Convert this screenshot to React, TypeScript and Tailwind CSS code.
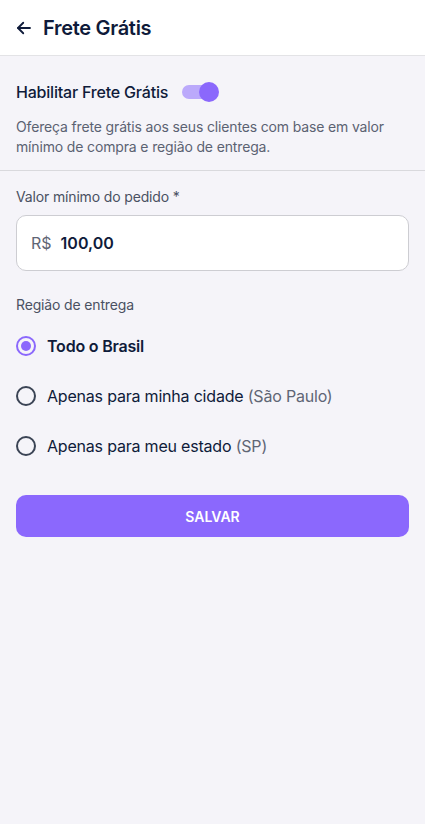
import { useState } from "react";

type Region = {
  id: string;
  label: string;
  extra?: string;
};

const REGIONS: Region[] = [
  { id: "brasil", label: "Todo o Brasil" },
  { id: "cidade", label: "Apenas para minha cidade", extra: "(São Paulo)" },
  { id: "estado", label: "Apenas para meu estado", extra: "(SP)" },
];

function BackArrow() {
  return (
    <svg width="18" height="18" viewBox="0 0 24 24" fill="none" stroke="#0f1b3a" strokeWidth="2.4" strokeLinecap="round" strokeLinejoin="round">
      <path d="M20 12H4" />
      <path d="M11 5l-7 7 7 7" />
    </svg>
  );
}

export default function App() {
  const [enabled, setEnabled] = useState(true);
  const [region, setRegion] = useState("brasil");

  return (
    <div className="min-h-[824px] w-full bg-[#f5f4f9] font-['Inter','Noto_Sans',sans-serif] text-[#0f1b3a]">
      <div className="flex h-[56px] items-center gap-[10px] border-b border-[#e3e3e6] bg-white px-[15px]">
        <BackArrow />
        <h1 className="text-[20px] font-semibold tracking-[-0.3px]">Frete Grátis</h1>
      </div>

      <div className="border-b border-[#d9d9dd] px-[16px] pb-[13px] pt-[24px]">
        <div className="flex items-center gap-[14px]">
          <span className="text-[16px] font-medium tracking-[-0.2px]">Habilitar Frete Grátis</span>
          <button
            onClick={() => setEnabled(!enabled)}
            className="relative h-[20px] w-[37px]"
          >
            <span className={`absolute left-0 top-[3px] h-[14px] w-[33px] rounded-full ${enabled ? "bg-[#bba9fb]" : "bg-[#d1d5db]"}`} />
            <span className={`absolute top-0 h-[20px] w-[20px] rounded-full ${enabled ? "right-0 bg-[#8b68fc]" : "left-0 bg-white"}`} />
          </button>
        </div>
        <p className="mt-[13px] text-[14px] leading-[20px] tracking-[-0.15px] text-[#5b6272]">
          Ofereça frete grátis aos seus clientes com base em valor mínimo de compra e região de entrega.
        </p>
      </div>

      <div className="px-[16px] pt-[13px]">
        <label className="text-[14px] tracking-[-0.15px] text-[#4a5162]">Valor mínimo do pedido *</label>
        <div className="mt-[7px] flex h-[56px] items-center gap-[9px] rounded-[10px] border border-[#cdcdd2] bg-white px-[14px]">
          <span className="text-[16px] text-[#5f6675]">R$</span>
          <span className="text-[16px] font-semibold">100,00</span>
        </div>

        <div className="mt-[23px] text-[14px] tracking-[-0.15px] text-[#4a5162]">Região de entrega</div>
        <div className="mt-[6px] flex flex-col">
          {REGIONS.map((r) => {
            const active = region === r.id;
            return (
              <button
                key={r.id}
                onClick={() => setRegion(r.id)}
                className="flex h-[50px] items-center gap-[11px] text-left"
              >
                <span
                  className={`flex h-[20px] w-[20px] items-center justify-center rounded-full border-2 ${active ? "border-[#8b68fc]" : "border-[#3b4455]"}`}
                >
                  {active && <span className="h-[10px] w-[10px] rounded-full bg-[#8b68fc]" />}
                </span>
                <span className={`text-[16px] tracking-[-0.2px] ${active ? "font-semibold" : ""}`}>
                  {r.label}
                  {r.extra && <span className="text-[#5f6675]"> {r.extra}</span>}
                </span>
              </button>
            );
          })}
        </div>

        <button className="mt-[24px] flex h-[42px] w-full items-center justify-center rounded-[10px] bg-[#8b68fd] text-[14px] font-semibold text-white">
          SALVAR
        </button>
      </div>
    </div>
  );
}
